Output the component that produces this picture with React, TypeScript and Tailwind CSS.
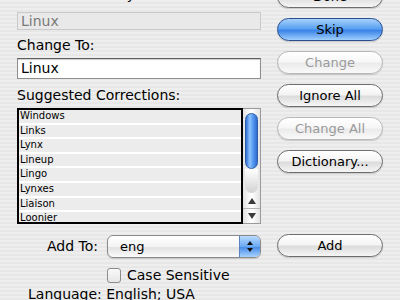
import React from 'react';

const font = "font-['DejaVu_Sans',sans-serif]";

const suggestions = ['Windows', 'Links', 'Lynx', 'Lineup', 'Lingo', 'Lynxes', 'Liaison', 'Loonier'];

const AquaButton = ({
  label,
  variant = 'normal',
  className = '',
}: {
  label: string;
  variant?: 'normal' | 'default' | 'disabled';
  className?: string;
}) => {
  const styles = {
    normal:
      'border-[#6d6d6d] text-black bg-[linear-gradient(to_bottom,#ffffff_0%,#f4f4f4_45%,#dcdcdc_55%,#f6f6f6_100%)]',
    default:
      'border-[#2a4f8f] text-black bg-[linear-gradient(to_bottom,#a9d1fb_0%,#5aa2f2_45%,#3b83e6_55%,#9fd0ff_100%)]',
    disabled:
      'border-[#b7b7b7] text-[#9a9a9a] bg-[linear-gradient(to_bottom,#ffffff_0%,#f7f7f7_45%,#ebebeb_55%,#f9f9f9_100%)]',
  }[variant];
  return (
    <div
      className={`h-[23px] w-[106px] rounded-full border flex items-center justify-center text-[13px] leading-none shadow-[0_1px_1px_rgba(0,0,0,0.15)] ${styles} ${className}`}
    >
      {label}
    </div>
  );
};

const ScrollBar = () => (
  <div className="w-[18px] h-full border-y border-r border-[#9a9a9a] bg-[linear-gradient(to_right,#e2e2e2,#ffffff_50%,#e4e4e4)] flex flex-col">
    <div className="h-[84px] px-[2px] pt-[4px] flex flex-col">
      <div className="h-[56px] rounded-full border border-[#2f5fa8] bg-[linear-gradient(to_right,#2f6fd6,#8ec2fb_35%,#5b9ff2_60%,#2d6ad2)]" />
      <div className="flex-1 rounded-b-full bg-[linear-gradient(to_bottom,#ffffff,#d2d2d2)]" />
    </div>
    <div className="flex-1 flex flex-col">
      <div className="h-[16px] flex items-center justify-center border-b border-[#b5b5b5]">
        <svg width="8" height="6" viewBox="0 0 8 6">
          <path d="M4 0 L8 6 L0 6 Z" fill="#3a3a3a" />
        </svg>
      </div>
      <div className="flex-1 flex items-center justify-center">
        <svg width="8" height="6" viewBox="0 0 8 6">
          <path d="M0 0 L8 0 L4 6 Z" fill="#3a3a3a" />
        </svg>
      </div>
    </div>
  </div>
);

const App = () => {
  return (
    <div
      className={`w-[400px] h-[300px] overflow-hidden ${font} text-black bg-[repeating-linear-gradient(to_bottom,#eeeeee_0px,#eeeeee_2px,#e7e7e7_2px,#e7e7e7_4px)]`}
    >
      <div className="flex">
        {/* Left column */}
        <div className="ml-[17px] w-[244px] flex flex-col">
          <div className="-mt-[14px] h-[16px] leading-[16px] text-[14px]">Not in Dictionary:</div>
          <div className="mt-[10px] h-[18px] border border-[#c9c9c9] bg-[#e9e9e9] text-[14px] leading-[16px] text-[#7a7a7a] pl-[3px]">
            Linux
          </div>
          <div className="mt-[7px] h-[16px] leading-[16px] text-[14px]">Change To:</div>
          <div className="mt-[5px] h-[21px] border border-[#8e8e8e] border-t-[#5f5f5f] bg-white text-[14px] leading-[19px] pl-[3px] shadow-[inset_0_1px_1px_rgba(0,0,0,0.2)]">
            Linux
          </div>
          <div className="mt-[8px] h-[16px] leading-[16px] text-[14px]">Suggested Corrections:</div>
          <div className="mt-[5px] h-[116px] flex">
            <div className="w-[226px] h-full border-2 border-black bg-white overflow-hidden">
              {suggestions.map((s) => (
                <div
                  key={s}
                  className="h-[14.6px] border-b-2 border-white bg-[#ececec] text-[10px] leading-[12px] pl-[1px]"
                >
                  {s}
                </div>
              ))}
            </div>
            <ScrollBar />
          </div>
          <div className="mt-[11px] h-[23px] flex items-center">
            <div className="w-[90px] text-right pr-[9px] text-[14px]">Add To:</div>
            <div className="flex-1 h-full rounded-[6px] border border-[#8a8a8a] flex overflow-hidden bg-[linear-gradient(to_bottom,#ffffff,#f3f3f3_50%,#e2e2e2_55%,#fbfbfb)] shadow-[0_1px_1px_rgba(0,0,0,0.15)]">
              <div className="flex-1 pl-[12px] text-[13px] leading-[21px]">eng</div>
              <div className="w-[21px] border-l border-[#5b82c0] bg-[linear-gradient(to_bottom,#b9daff,#6aa9f2_50%,#4a8ee8_55%,#a9d3ff)] flex flex-col items-center justify-center gap-[3px]">
                <svg width="6" height="4" viewBox="0 0 6 4">
                  <path d="M3 0 L6 4 L0 4 Z" fill="#111" />
                </svg>
                <svg width="6" height="4" viewBox="0 0 6 4">
                  <path d="M0 0 L6 0 L3 4 Z" fill="#111" />
                </svg>
              </div>
            </div>
          </div>
          <div className="mt-[9px] h-[16px] flex items-center">
            <div className="ml-[90px] w-[14px] h-[15px] rounded-[3px] border border-[#8d8d8d] bg-[linear-gradient(to_bottom,#fafafa,#e6e6e6)]" />
            <div className="ml-[6px] text-[14px] leading-[16px]">Case Sensitive</div>
          </div>
          <div className="mt-[3px] ml-[11px] h-[16px] leading-[16px] text-[14px]">Language: English; USA</div>
        </div>

        {/* Right column */}
        <div className="ml-[16px] -mt-[15px] flex flex-col gap-[10px]">
          <AquaButton label="Done" />
          <AquaButton label="Skip" variant="default" />
          <AquaButton label="Change" variant="disabled" />
          <AquaButton label="Ignore All" />
          <AquaButton label="Change All" variant="disabled" />
          <AquaButton label="Dictionary..." />
          <AquaButton label="Add" className="mt-[51px]" />
        </div>
      </div>
    </div>
  );
};

export default App;
